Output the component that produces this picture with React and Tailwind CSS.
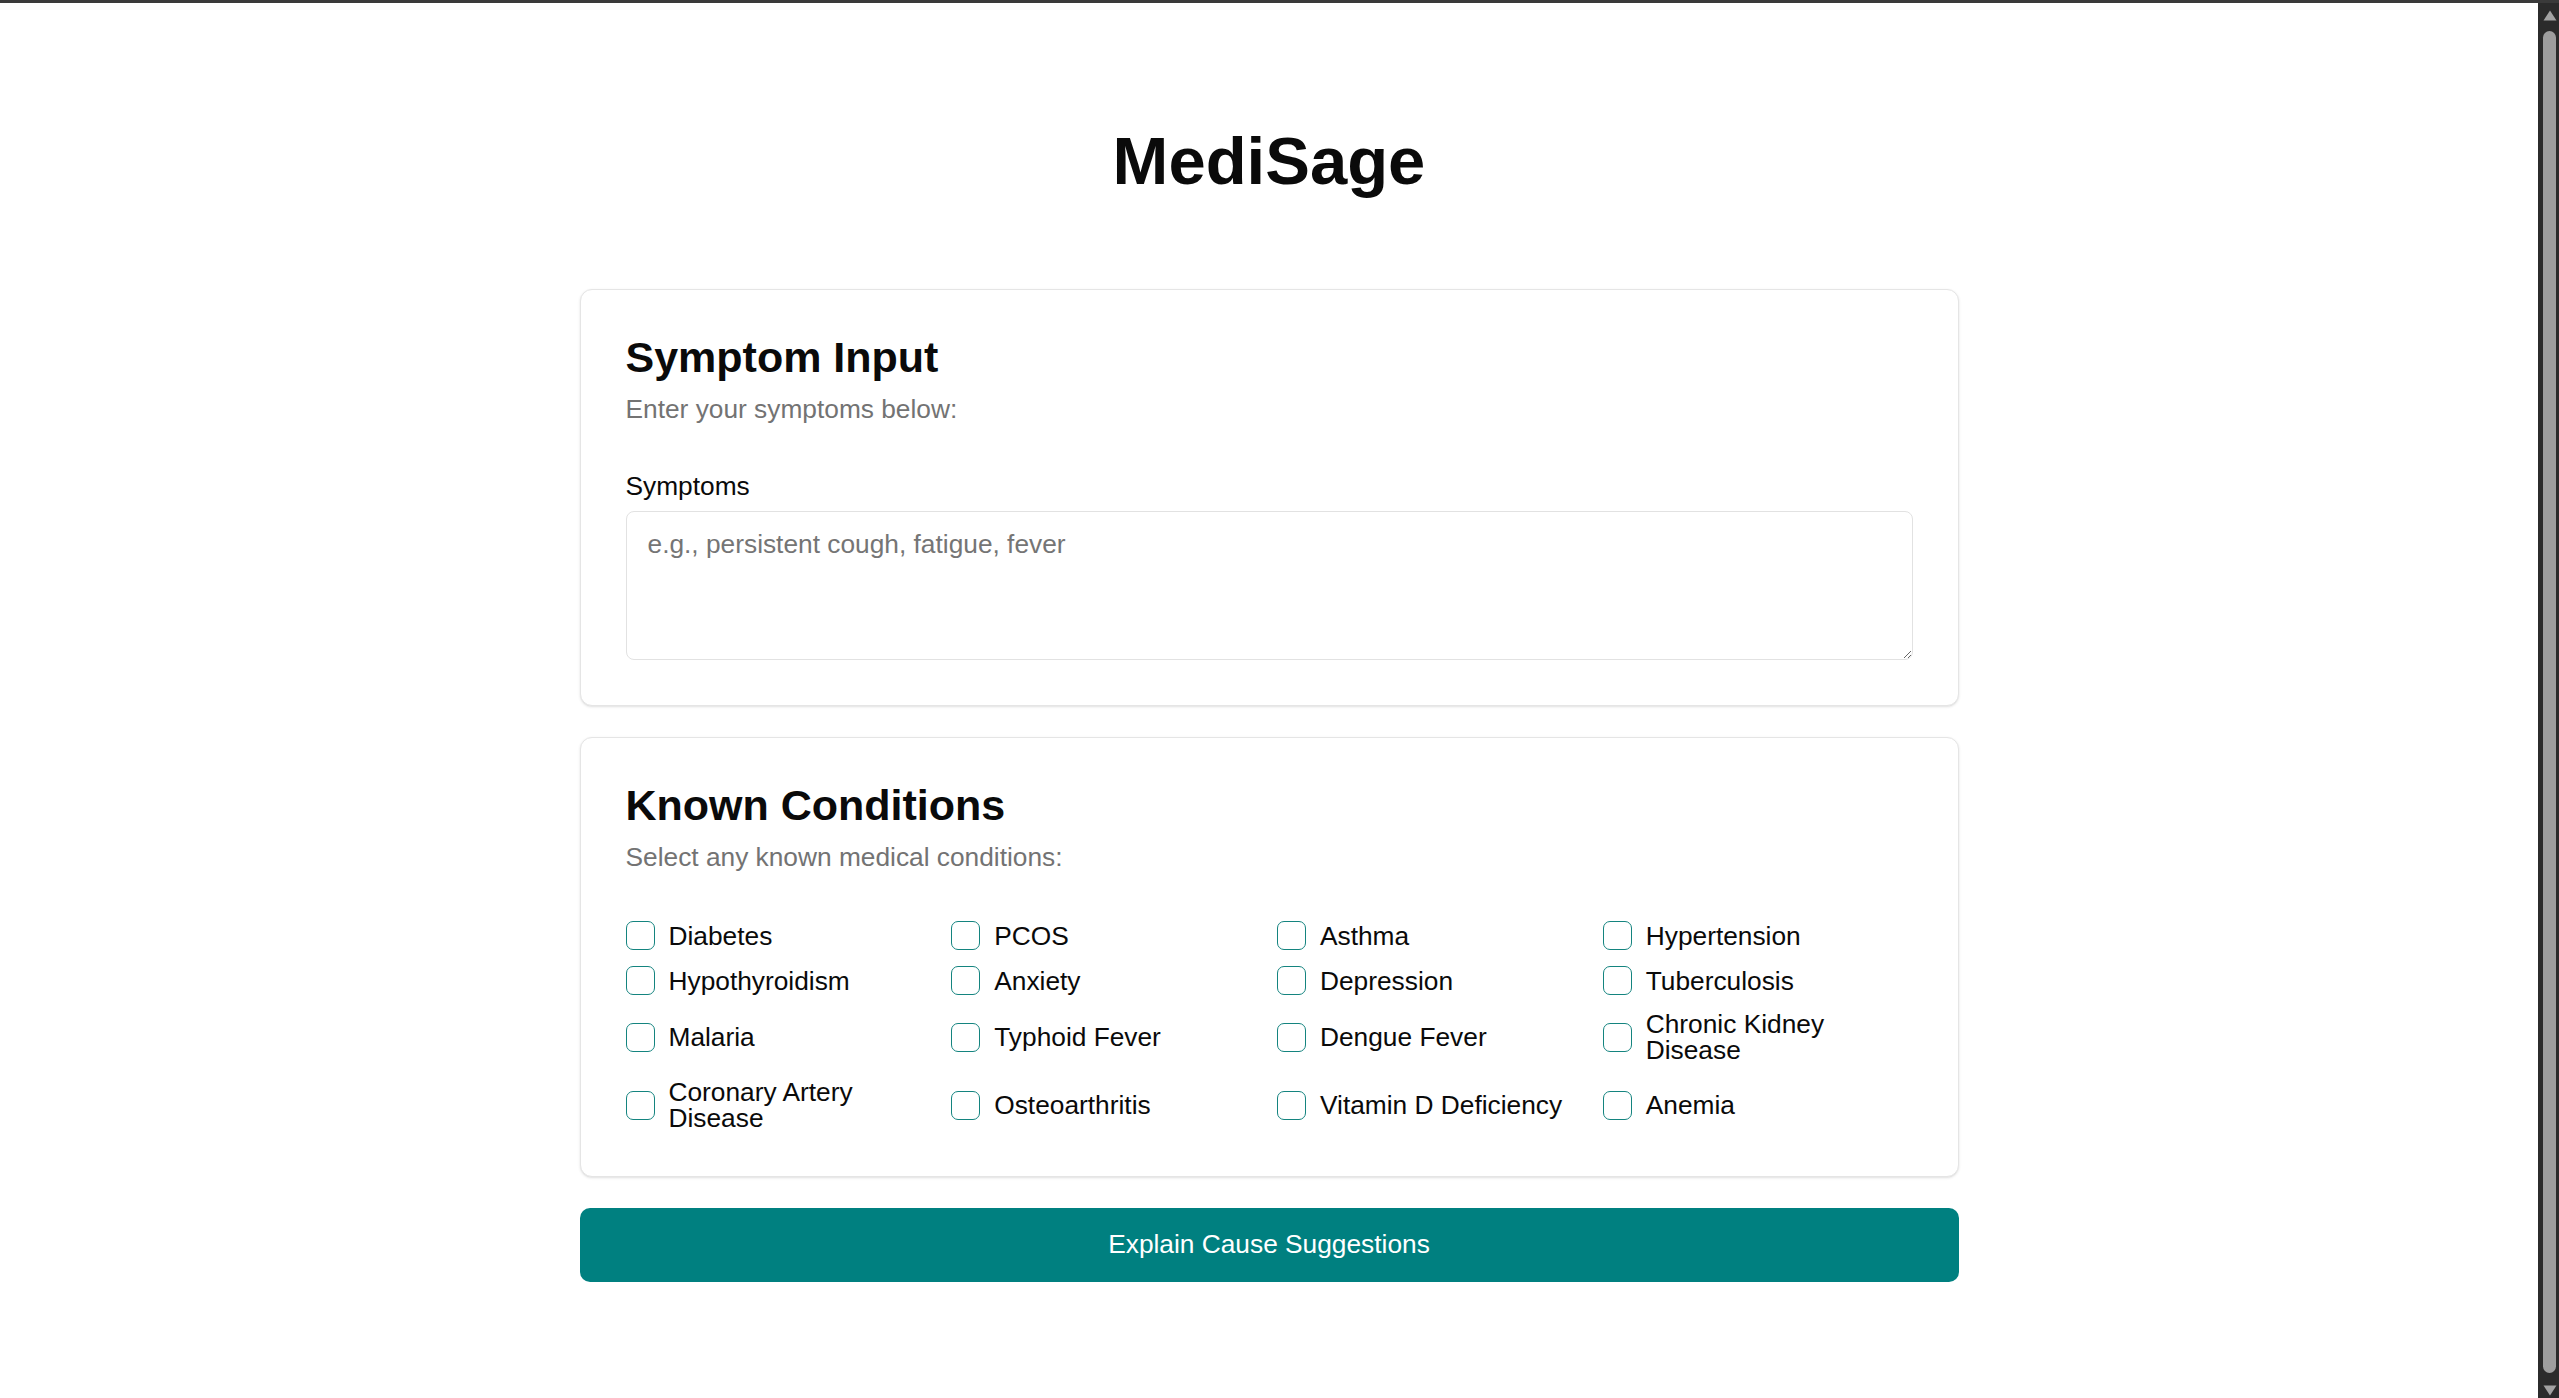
const conditions = [
  "Diabetes",
  "PCOS",
  "Asthma",
  "Hypertension",
  "Hypothyroidism",
  "Anxiety",
  "Depression",
  "Tuberculosis",
  "Malaria",
  "Typhoid Fever",
  "Dengue Fever",
  "Chronic Kidney Disease",
  "Coronary Artery Disease",
  "Osteoarthritis",
  "Vitamin D Deficiency",
  "Anemia",
];

function Card({ title, subtitle, children }) {
  return (
    <div className="rounded-[12px] border border-[#e5e5e5] bg-white p-[45px] shadow-sm">
      <h2 className="text-[43px] font-bold leading-[45px] text-[#0a0a0a]">{title}</h2>
      <p className="mt-[10px] text-[26.3px] leading-[39px] text-[#737373]">{subtitle}</p>
      {children}
    </div>
  );
}

function ScrollBar() {
  return (
    <div className="flex w-[21px] shrink-0 flex-col items-center bg-[#2b2b2b] pl-[2px] pt-[7px] pb-[2px]">
      <svg width="14" height="11" viewBox="0 0 14 11">
        <path d="M7 0.5 L13.5 10.5 L0.5 10.5 Z" fill="#a3a3a3" />
      </svg>
      <div className="mt-[10px] w-[13px] flex-1 rounded-full bg-[#9e9e9e]" />
      <svg className="mt-[12px]" width="14" height="11" viewBox="0 0 14 11">
        <path d="M0.5 0.5 L13.5 0.5 L7 10.5 Z" fill="#a3a3a3" />
      </svg>
    </div>
  );
}

export default function App() {
  return (
    <div className="flex min-h-screen flex-col bg-white font-['Liberation_Sans',Arial,sans-serif]">
      <div className="h-[3px] bg-[#3a3a3a]" />
      <div className="flex flex-1">
        <main className="flex-1 pt-[124px] pb-[60px]">
          <h1 className="text-center text-[67px] font-bold leading-[68px] text-[#0a0a0a]">MediSage</h1>

          <div className="mx-auto mt-[94px] flex w-[1379px] flex-col gap-[31px]">
            <Card title="Symptom Input" subtitle="Enter your symptoms below:">
              <label className="mt-[38px] block text-[26.3px] leading-[39px] text-[#0a0a0a]">Symptoms</label>
              <textarea
                className="mt-[5px] block h-[149px] w-full rounded-[8px] border border-[#e2e2e2] px-[21px] py-[13px] text-[26.3px] leading-[39px] text-[#0a0a0a] outline-none placeholder:text-[#757575]"
                placeholder="e.g., persistent cough, fatigue, fever"
              />
            </Card>

            <Card title="Known Conditions" subtitle="Select any known medical conditions:">
              <div className="mt-[44px] grid grid-cols-4 gap-4">
                {conditions.map((c) => (
                  <label key={c} className="flex items-center gap-[14px]">
                    <span className="h-[29px] w-[29px] shrink-0 rounded-[7px] border-[1.5px] border-[#14847f]" />
                    <span className="text-[26.3px] leading-[26px] text-[#0a0a0a]">{c}</span>
                  </label>
                ))}
              </div>
            </Card>

            <button className="h-[74px] w-full rounded-[10px] bg-[#008080] text-[26.3px] text-white">
              Explain Cause Suggestions
            </button>
          </div>
        </main>
        <ScrollBar />
      </div>
    </div>
  );
}
